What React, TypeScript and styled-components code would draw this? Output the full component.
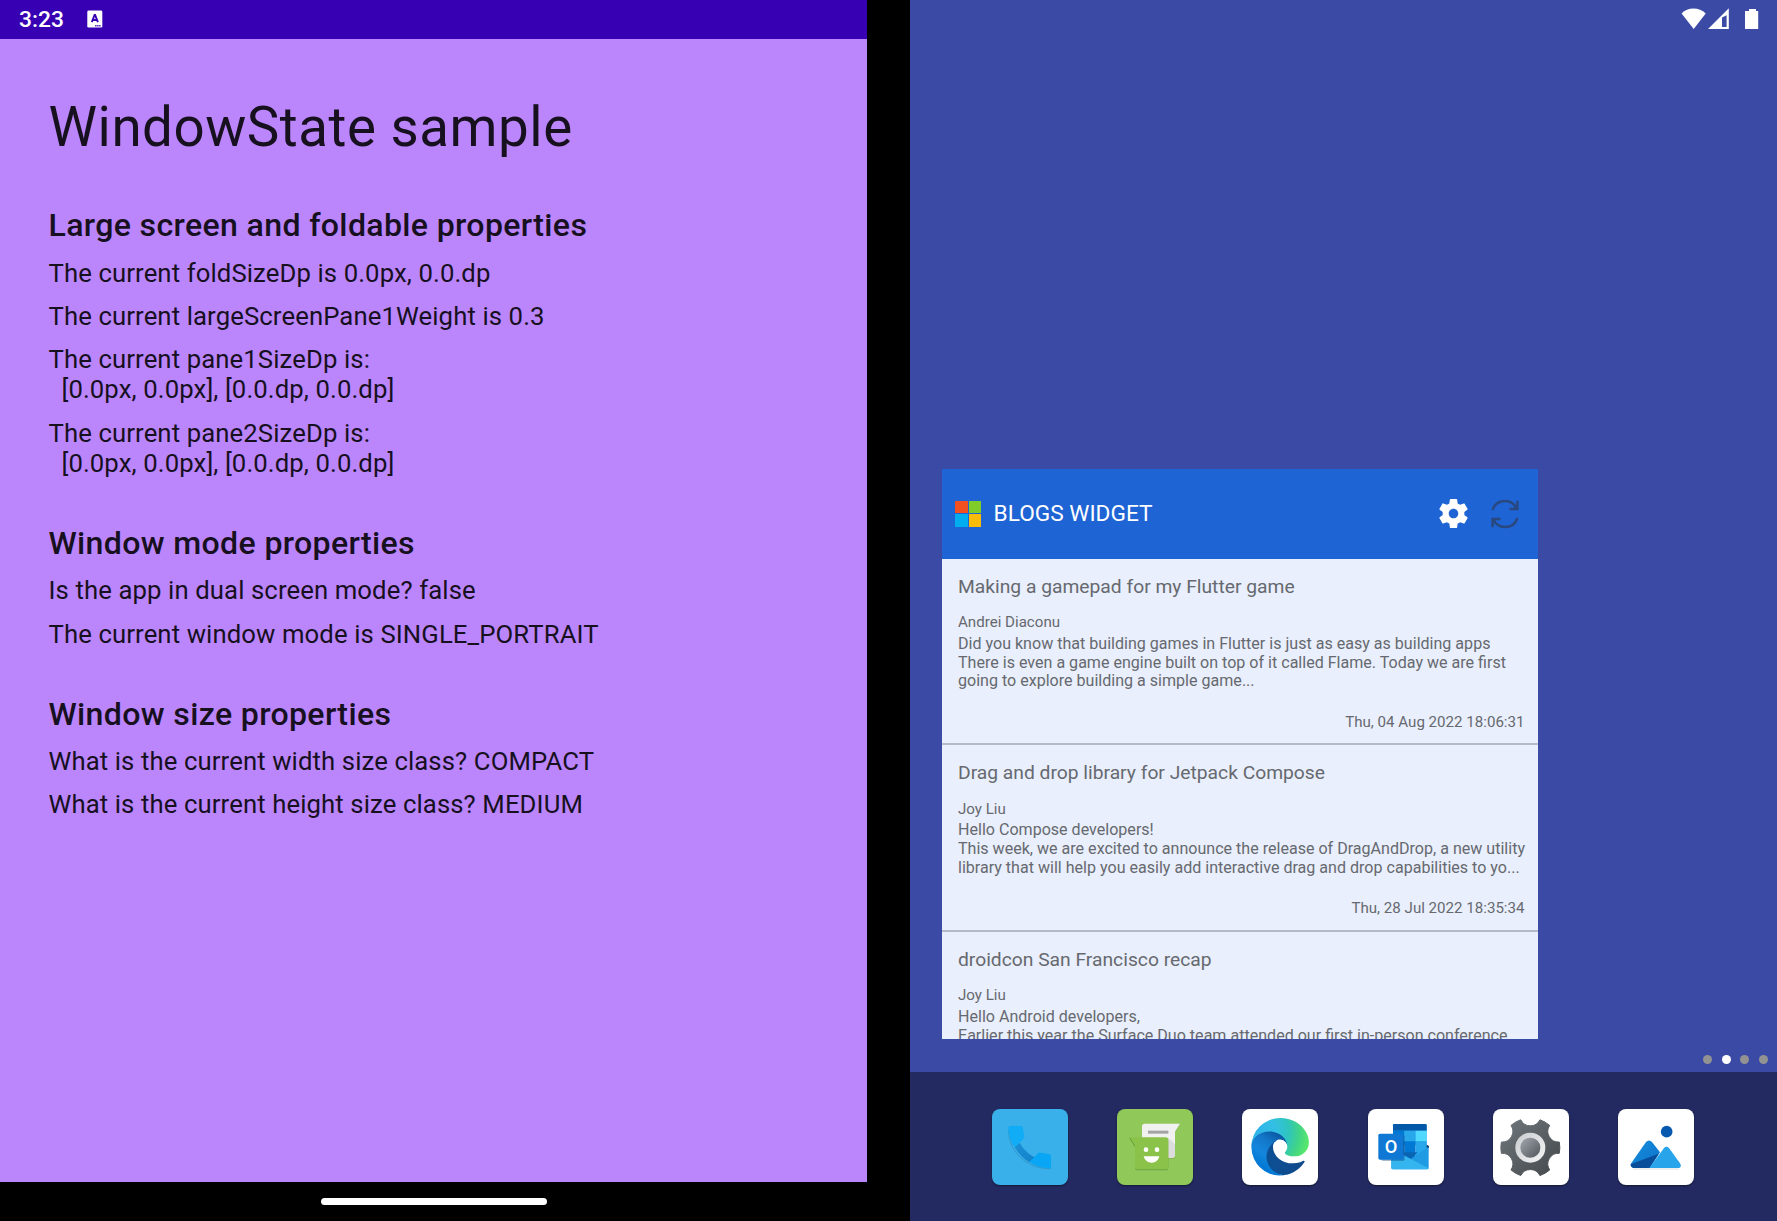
import React from "react";
import styled, { createGlobalStyle } from "styled-components";

const GlobalStyle = createGlobalStyle`
  * { box-sizing: border-box; }
  body { margin: 0; background: #000; font-family: Roboto, "Liberation Sans", sans-serif; }
  h1, h2, h3, p { margin: 0; }
`;

const Device = styled.div`
  display: flex;
  justify-content: space-between;
  width: 1777px;
  height: 1221px;
  overflow: hidden;
  background: #000;
`;

/* ---------- left screen ---------- */

const LeftScreen = styled.section`
  display: flex;
  flex-direction: column;
  width: 867px;
`;

const StatusBar = styled.header`
  display: flex;
  align-items: center;
  gap: 23.5px;
  height: 38.7px;
  padding-left: 19px;
  background: #3700b3;
`;

const Clock = styled.span`
  color: #fff;
  font-size: 22.8px;
  font-weight: 500;
  line-height: 26px;
  padding-top: 2px;
`;

const AppBody = styled.main`
  flex: 1;
  padding: 56.4px 48.5px 0;
  background: #bb86fc;
  color: #17101f;
`;

const AppTitle = styled.h1`
  font-size: 54.7px;
  font-weight: 400;
  line-height: 64px;
  letter-spacing: 0.53px;
`;

const Section = styled.section<{ $gap: number }>`
  display: flex;
  flex-direction: column;
  gap: 13.1px;
  margin-top: ${(p) => p.$gap}px;
`;

const SectionTitle = styled.h2`
  margin-bottom: -0.6px;
  font-size: 32.1px;
  font-weight: 500;
  line-height: 37.6px;
  letter-spacing: 0.35px;
`;

const Property = styled.p`
  font-size: 25.7px;
  line-height: 30.2px;
  letter-spacing: 0.11px;
  white-space: pre;
`;

const NavBar = styled.footer`
  display: flex;
  justify-content: center;
  height: 39px;
  padding-top: 16px;
  background: #000;
`;

const NavHandle = styled.div`
  width: 226px;
  height: 7px;
  border-radius: 4px;
  background: #fff;
`;

/* ---------- right screen ---------- */

const RightScreen = styled.section`
  display: flex;
  flex-direction: column;
  width: 867px;
  background: #3b4aa5;
`;

const SystemIcons = styled.header`
  display: flex;
  justify-content: flex-end;
  height: 468.5px;
  padding: 8px 17px 0 0;
`;

const Widget = styled.article`
  display: flex;
  flex-direction: column;
  width: 596px;
  height: 570.5px;
  margin-left: 32px;
  background: #e9effc;
  overflow: hidden;
`;

const WidgetHeader = styled.div`
  display: flex;
  align-items: center;
  flex: none;
  height: 90.2px;
  padding: 0 18px 0 13px;
  background: #1e64d4;
`;

const Logo = styled.div`
  display: grid;
  grid-template-columns: 12.5px 12.5px;
  grid-template-rows: 12.5px 12.5px;
  gap: 1px;
`;

const Tile = styled.i<{ $color: string }>`
  background: ${(p) => p.$color};
`;

const WidgetTitle = styled.h2`
  flex: 1;
  margin-left: 12.5px;
  color: #fff;
  font-size: 22.7px;
  font-weight: 400;
  line-height: 26px;
`;

const HeaderIcons = styled.div`
  display: flex;
  align-items: center;
  gap: 22px;
`;

const Post = styled.div`
  flex: none;
  height: 186.6px;
  padding: 16px 13.5px 0 16px;
  border-bottom: 2px solid #b3bac8;
  color: #66696f;
`;

const PostTitle = styled.h3`
  font-size: 19.26px;
  font-weight: 400;
  line-height: 23px;
`;

const Author = styled.p`
  margin-top: 15.5px;
  font-size: 15.1px;
  line-height: 18px;
`;

const Summary = styled.p`
  height: 56.4px;
  margin-top: 3.6px;
  font-size: 16.07px;
  line-height: 18.8px;
  white-space: pre;
`;

const PostDate = styled.p`
  margin-top: 21.5px;
  font-size: 15.1px;
  line-height: 18px;
  text-align: right;
`;

const Pager = styled.div`
  display: flex;
  flex: 1;
  align-items: center;
  justify-content: flex-end;
  gap: 9.7px;
  padding: 7px 9px 0 0;
`;

const Dot = styled.i<{ $active: boolean }>`
  width: 9px;
  height: 9px;
  border-radius: 50%;
  background: ${(p) => (p.$active ? "#fff" : "#929292")};
`;

const Dock = styled.footer`
  display: flex;
  justify-content: center;
  gap: 49.2px;
  height: 148.7px;
  padding: 36.4px 1px 0 0;
  background: #232a61;
`;

const AppIcon = styled.div<{ $bg: string }>`
  width: 76px;
  height: 76px;
  border-radius: 8px;
  overflow: hidden;
  background: ${(p) => p.$bg};
  box-shadow: 0 1px 2px rgba(0, 0, 0, 0.45);
`;

const Drawing = styled.svg`
  display: block;
  flex: none;
`;

/* ---------- drawings ---------- */

const KeyboardBadge = () => (
  <Drawing width="16" height="18" viewBox="0 0 16 18">
    <rect x="0.3" y="0.6" width="15" height="17" rx="1.4" fill="#fff" />
    <path d="M4.8 12.2 7.6 5h.5l2.8 7.2M5.8 10h4.2" fill="none" stroke="#3700b3" strokeWidth="1.9" />
    <path d="M8.2 15.7h6" stroke="#3700b3" strokeWidth="1.6" strokeDasharray="1.3 .7" />
  </Drawing>
);

const SystemGlyphs = () => (
  <Drawing width="80" height="24" viewBox="0 0 80 24">
    <path d="M1.6 5.600C4.800 2 8.800.6 13.500.6S22.300 2 25.700 5.600L13.700 21Z" fill="#fff" />
    <path d="M48.800.3V21H28ZM42 9.400V19h4.600V7.200Z" fill="#fff" fillRule="evenodd" />
    <path d="M66 3h3V1h7v2h2.200V21H65V3Z" fill="#fff" />
  </Drawing>
);

const GearGlyph = () => (
  <Drawing width="29" height="29" viewBox="2 2 20 20">
    <path
      fill="#fff"
      d="M19.43 12.98c.04-.32.07-.64.07-.98s-.03-.66-.07-.98l2.11-1.65c.19-.15.24-.42.12-.64l-2-3.46c-.12-.22-.39-.3-.61-.22l-2.49 1c-.52-.4-1.08-.73-1.69-.98l-.38-2.65C14.46 2.18 14.25 2 14 2h-4c-.25 0-.46.18-.49.42l-.38 2.65c-.61.25-1.17.59-1.69.98l-2.49-1c-.23-.09-.49 0-.61.22l-2 3.46c-.13.22-.07.49.12.64l2.11 1.65c-.04.32-.07.65-.07.98s.03.66.07.98l-2.11 1.65c-.19.15-.24.42-.12.64l2 3.46c.12.22.39.3.61.22l2.49-1c.52.4 1.08.73 1.69.98l.38 2.65c.03.24.24.42.49.42h4c.25 0 .46-.18.49-.42l.38-2.65c.61-.25 1.17-.59 1.69-.98l2.49 1c.23.09.49 0 .61-.22l2-3.46c.12-.22.07-.49-.12-.64l-2.11-1.65zM12 15.3c-1.820 0-3.300-1.480-3.300-3.300s1.480-3.300 3.300-3.300 3.300 1.480 3.300 3.300-1.480 3.300-3.300 3.300z"
    />
  </Drawing>
);

const RefreshGlyph = () => (
  <Drawing width="30" height="30" viewBox="0 0 30 30" fill="none" stroke="#29487f" strokeWidth="2.5">
    <path d="M2.500 11C4.500 5 9 2 15 2c5.300 0 9.400 2.900 11.600 7.500M27.400 1.800v8.100h-7.900" />
    <path d="M27.500 19C25.500 25 21 28 15 28c-5.300 0-9.400-2.900-11.600-7.500M2.600 28.200v-8.100h7.900" />
  </Drawing>
);

const Phone = () => (
  <Drawing width="76" height="76" viewBox="0 0 228 228">
    <defs>
      <linearGradient id="phoneStrip" x1="0" y1="0" x2="1" y2="1">
        <stop offset="0" stopColor="#1a8fd6" />
        <stop offset="1" stopColor="#1282cb" />
      </linearGradient>
    </defs>
    <path d="M52 55h38M49 62c2 66 52 116 124 117h5" fill="none" stroke="#2e86b8" strokeWidth="3" opacity=".6" />
    <path d="M68 115 83 101C92 118 108 134 128 145L112 160C94 149 79 134 68 115Z" fill="url(#phoneStrip)" />
    <path d="M54 51h33q4 0 5 4l5 27q1 4-2 7L68 115C55 97 49 77 49 56q0-5 5-5Z" fill="#10acf6" />
    <path d="M112 160 138 133q3-3 7-2l28 5q4 1 4 5v32q0 5-5 5C150 178 130 171 112 160Z" fill="#08a6f4" />
  </Drawing>
);

const Messages = () => (
  <Drawing width="76" height="76" viewBox="0 0 228 228">
    <path d="M83 46h106l-15 24v72q0 7-7 7h-20L75 84V53q0-7 8-7Z" fill="#6f9d45" opacity=".5" />
    <path d="M83 44h106l-15 24v71q0 7-7 7H82q-7 0-7-7V52q0-8 8-8Z" fill="#f1f1f1" />
    <path d="M154 86 174 106v33q0 7-7 7h-13Z" fill="#dcdcdc" />
    <rect x="93" y="65" width="61" height="9" fill="#a3a3a3" />
    <path d="M38 88h108q8 0 8 8v80q0 8-8 8H62q-8 0-8-8v-64Z" fill="#5e8c35" opacity=".6" />
    <path d="M38 85h108q8 0 8 8v80q0 8-8 8H62q-8 0-8-8v-63Z" fill="#8bc34a" />
    <path d="M38 85 54 110v5L38 89Z" fill="#689f38" />
    <circle cx="87" cy="122" r="7" fill="#fff" />
    <circle cx="120" cy="122" r="7" fill="#fff" />
    <path d="M80 142h47c-3 12-12 19-23 19s-21-7-24-19Z" fill="#fff" />
  </Drawing>
);

const Edge = () => (
  <Drawing width="76" height="76" viewBox="0 0 228 228">
    <defs>
      <linearGradient id="edgeDark" x1="58" y1="177" x2="236" y2="177" gradientUnits="userSpaceOnUse">
        <stop offset="0" stopColor="#0c4f94" />
        <stop offset="1" stopColor="#114a8b" />
      </linearGradient>
      <linearGradient id="edgeBlue" x1="130" y1="80" x2="40" y2="215" gradientUnits="userSpaceOnUse">
        <stop offset="0" stopColor="#0b5aa5" />
        <stop offset=".3" stopColor="#1377c8" />
        <stop offset=".65" stopColor="#1486dd" />
        <stop offset="1" stopColor="#0078d4" />
      </linearGradient>
      <radialGradient id="edgeGreen" cx="25" cy="60" r="235" gradientUnits="userSpaceOnUse">
        <stop offset="0" stopColor="#2fb4ea" />
        <stop offset=".35" stopColor="#32bfe4" />
        <stop offset=".6" stopColor="#2fc5bd" />
        <stop offset=".8" stopColor="#41d487" />
        <stop offset="1" stopColor="#5be96a" />
      </radialGradient>
    </defs>
    <g transform="translate(28 27) scale(.675)">
      <path fill="url(#edgeDark)" d="M231 190.5c-3.400 1.800-6.900 3.400-10.500 4.700a101.500 101.500 0 0 1-35.900 6.400c-47.300 0-88.500-32.500-88.500-74.300a31.500 31.500 0 0 1 16.400-27.300c-42.800 1.800-53.800 46.400-53.800 72.500 0 73.900 68.100 81.400 82.800 81.400 7.900 0 19.800-2.300 27-4.600l1.300-.4a128.300 128.300 0 0 0 66.600-52.800 4 4 0 0 0-5.400-5.600z" />
      <path fill="url(#edgeBlue)" d="M105.700 241.400a79.200 79.200 0 0 1-22.700-21.300 80.700 80.700 0 0 1 29.500-120c3.200-1.500 8.500-4.100 15.600-4a32.400 32.400 0 0 1 25.700 13 31.900 31.900 0 0 1 6.300 18.700c0-.2 24.500-79.600-80-79.600-43.900 0-80 41.600-80 78.200a130.200 130.200 0 0 0 12.100 56 128 128 0 0 0 156.400 67 75.500 75.500 0 0 1-62.800-8z" />
      <path fill="url(#edgeGreen)" d="M152.300 148.900c-.9 1-3.400 2.500-3.400 5.600 0 2.600 1.700 5.200 4.800 7.300 14.300 10 41.400 8.600 41.500 8.600a59.600 59.600 0 0 0 30.300-8.300 61.400 61.400 0 0 0 30.400-52.900c.3-22.400-8-37.300-11.300-43.900C223.500 23.900 177.700 0 128 0A128 128 0 0 0 0 126.200c.5-36.500 36.800-66 80-66 3.500 0 23.500.3 42 10.100 16.300 8.600 24.900 18.900 30.800 29.200 6.200 10.700 7.300 24.100 7.300 29.500 0 5.300-2.700 13.300-7.800 19.900z" />
    </g>
  </Drawing>
);

const OutlookLetter = styled.text`
  fill: #fff;
  font: 500 55px Roboto, sans-serif;
  text-anchor: middle;
`;

const Outlook = () => (
  <Drawing width="76" height="76" viewBox="0 0 228 228">
    <path d="M174 106 183 111V118H174Z" fill="#123b6d" />
    <path d="M79 45h93q4 0 4 4v60H75V49q0-4 4-4Z" fill="#28a8ea" />
    <path d="M79 45h93q4 0 4 4v16H75V49q0-4 4-4Z" fill="#0358a7" />
    <path d="M75 65h34v32H75Z" fill="#0078d4" />
    <path d="M109 65h34v32h-34Z" fill="#28a8ea" />
    <path d="M143 65h33v32h-33Z" fill="#50d9ff" />
    <path d="M75 97h34v54H75Z" fill="#064a8c" />
    <path d="M109 97h34v54h-34Z" fill="#0078d4" />
    <path d="M143 97h33v54h-33Z" fill="#28a8ea" />
    <path d="M109 130h40l-20 20-20-12Z" fill="#0a64b4" />
    <path d="M182 113v63q0 5-5 5H75q-5 0-5-5v-56l58 30Z" fill="#1f9be3" />
    <path d="M70 120 182 178q-2 3-5 3H75q-5 0-5-5Z" fill="#34b5ef" />
    <rect x="40" y="77" width="70" height="79" rx="5" fill="#0a3767" opacity=".35" />
    <rect x="31" y="74" width="76" height="78" rx="5" fill="#0f78d4" />
    <OutlookLetter x="69" y="132.500">O</OutlookLetter>
  </Drawing>
);

const gearOutline = (() => {
  const point = (deg: number) => {
    const a = (deg * Math.PI) / 180;
    return `${(112 + 88.5 * Math.cos(a)).toFixed(1)} ${(116 + 88.5 * Math.sin(a)).toFixed(1)}`;
  };
  let d = "";
  for (let tooth = 0; tooth < 6; tooth++) {
    const a = tooth * 60;
    d += tooth === 0 ? `M${point(a - 11)}` : `A32 32 0 0 0 ${point(a - 11)}`;
    d += `A90 90 0 0 1 ${point(a + 11)}`;
  }
  return `${d}A32 32 0 0 0 ${point(-11)}Z`;
})();

const Settings = () => (
  <Drawing width="76" height="76" viewBox="0 0 228 228">
    <defs>
      <linearGradient id="gearBody" x1="0" y1="0" x2="1" y2="1">
        <stop offset="0" stopColor="#70777c" />
        <stop offset="1" stopColor="#43484b" />
      </linearGradient>
      <linearGradient id="gearRing" x1="0" y1="0" x2="1" y2="1">
        <stop offset="0" stopColor="#c9ccd0" />
        <stop offset="1" stopColor="#f4f5f6" />
      </linearGradient>
      <linearGradient id="gearHub" x1="0" y1="0" x2="1" y2="1">
        <stop offset="0" stopColor="#a3a9af" />
        <stop offset="1" stopColor="#4e5459" />
      </linearGradient>
    </defs>
    <path d={gearOutline} fill="url(#gearBody)" stroke="url(#gearBody)" strokeWidth="3" strokeLinejoin="round" />
    <circle cx="112" cy="116" r="45" fill="url(#gearRing)" />
    <circle cx="112" cy="116" r="30" fill="url(#gearHub)" />
  </Drawing>
);

const Photos = () => (
  <Drawing width="76" height="76" viewBox="0 0 228 228">
    <defs>
      <linearGradient id="peakBack" x1="0" y1="0" x2="1" y2="1">
        <stop offset="0" stopColor="#1490df" />
        <stop offset="1" stopColor="#0f70c8" />
      </linearGradient>
    </defs>
    <path d="M46 180h136" stroke="#000" strokeWidth="3" opacity=".12" />
    <circle cx="146" cy="68" r="17.500" fill="#0659ae" />
    <path d="M84 99q9-9 18 0l24 31-31 47H47q-10-1-9-12Z" fill="url(#peakBack)" />
    <path d="M38 166 122 134 95 177H47q-9-1-9-11Z" fill="#084d99" />
    <path d="M138 117q7-8 15 0l34 47q5 12-6 13H94Z" fill="#27a4ea" />
  </Drawing>
);

/* ---------- content ---------- */

const sections = [
  {
    title: "Large screen and foldable properties",
    gap: 48.4,
    lines: [
      "The current foldSizeDp is 0.0px, 0.0.dp",
      "The current largeScreenPane1Weight is 0.3",
      "The current pane1SizeDp is:\n  [0.0px, 0.0px], [0.0.dp, 0.0.dp]",
      "The current pane2SizeDp is:\n  [0.0px, 0.0px], [0.0.dp, 0.0.dp]",
    ],
  },
  {
    title: "Window mode properties",
    gap: 47.2,
    lines: ["Is the app in dual screen mode? false", "The current window mode is SINGLE_PORTRAIT"],
  },
  {
    title: "Window size properties",
    gap: 47.2,
    lines: ["What is the current width size class? COMPACT", "What is the current height size class? MEDIUM"],
  },
];

const posts = [
  {
    title: "Making a gamepad for my Flutter game",
    author: "Andrei Diaconu",
    summary:
      "Did you know that building games in Flutter is just as easy as building apps\nThere is even a game engine built on top of it called Flame. Today we are first\ngoing to explore building a simple game...",
    date: "Thu, 04 Aug 2022 18:06:31",
  },
  {
    title: "Drag and drop library for Jetpack Compose",
    author: "Joy Liu",
    summary:
      "Hello Compose developers!\nThis week, we are excited to announce the release of DragAndDrop, a new utility\nlibrary that will help you easily add interactive drag and drop capabilities to yo...",
    date: "Thu, 28 Jul 2022 18:35:34",
  },
  {
    title: "droidcon San Francisco recap",
    author: "Joy Liu",
    summary: "Hello Android developers,\nEarlier this year the Surface Duo team attended our first in-person conference",
    date: "",
  },
];

const apps = [
  { name: "phone", bg: "#39b0e9", Icon: Phone },
  { name: "messages", bg: "#90c85a", Icon: Messages },
  { name: "edge", bg: "#fff", Icon: Edge },
  { name: "outlook", bg: "#fff", Icon: Outlook },
  { name: "settings", bg: "#fff", Icon: Settings },
  { name: "photos", bg: "#fff", Icon: Photos },
];

export default function App() {
  return (
    <>
      <GlobalStyle />
      <Device>
        <LeftScreen>
          <StatusBar>
            <Clock>3:23</Clock>
            <KeyboardBadge />
          </StatusBar>
          <AppBody>
            <AppTitle>WindowState sample</AppTitle>
            {sections.map((s) => (
              <Section key={s.title} $gap={s.gap}>
                <SectionTitle>{s.title}</SectionTitle>
                {s.lines.map((line) => (
                  <Property key={line}>{line}</Property>
                ))}
              </Section>
            ))}
          </AppBody>
          <NavBar>
            <NavHandle />
          </NavBar>
        </LeftScreen>

        <RightScreen>
          <SystemIcons>
            <SystemGlyphs />
          </SystemIcons>
          <Widget>
            <WidgetHeader>
              <Logo>
                <Tile $color="#f35020" />
                <Tile $color="#80cc28" />
                <Tile $color="#00adef" />
                <Tile $color="#fbbc09" />
              </Logo>
              <WidgetTitle>BLOGS WIDGET</WidgetTitle>
              <HeaderIcons>
                <GearGlyph />
                <RefreshGlyph />
              </HeaderIcons>
            </WidgetHeader>
            {posts.map((p) => (
              <Post key={p.title}>
                <PostTitle>{p.title}</PostTitle>
                <Author>{p.author}</Author>
                <Summary>{p.summary}</Summary>
                <PostDate>{p.date}</PostDate>
              </Post>
            ))}
          </Widget>
          <Pager>
            {[0, 1, 2, 3].map((i) => (
              <Dot key={i} $active={i === 1} />
            ))}
          </Pager>
          <Dock>
            {apps.map(({ name, bg, Icon }) => (
              <AppIcon key={name} $bg={bg}>
                <Icon />
              </AppIcon>
            ))}
          </Dock>
        </RightScreen>
      </Device>
    </>
  );
}
